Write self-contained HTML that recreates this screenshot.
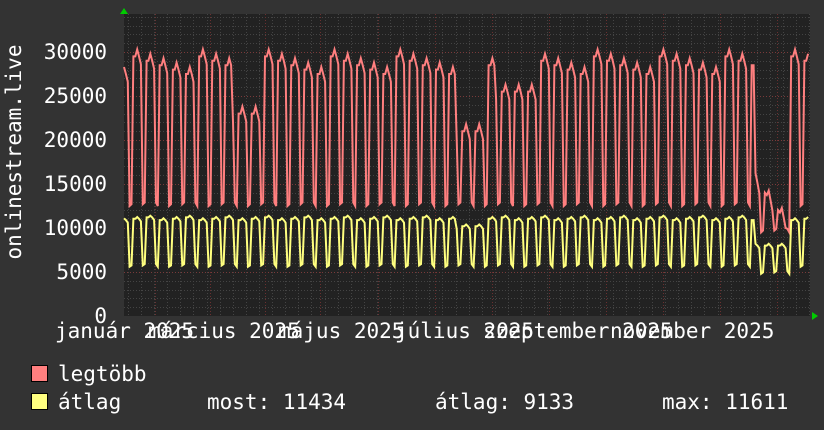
<!DOCTYPE html>
<html><head><meta charset="utf-8"><style>
html,body{margin:0;padding:0;background:#333;}
body{width:824px;height:430px;overflow:hidden;position:relative;font-family:"DejaVu Sans Mono","Liberation Mono",monospace;color:#fff;}
svg{position:absolute;left:0;top:0;}
text{font-family:"DejaVu Sans Mono","Liberation Mono",monospace;fill:#fff;font-size:21px;}
</style></head><body>
<svg id="g" width="824" height="430" xmlns="http://www.w3.org/2000/svg">
<rect x="0" y="0" width="824" height="430" fill="#333"/>
<rect x="124" y="14" width="686" height="302" fill="#222"/>
<g id="grid"></g>
<g id="lines"></g>
<polygon points="120,14 128,14 124,8" fill="#0c0"/>
<polygon points="812,312 812,320 818,316" fill="#0c0"/>
<text x="107" y="59" text-anchor="end">30000</text>
<text x="107" y="103" text-anchor="end">25000</text>
<text x="107" y="147" text-anchor="end">20000</text>
<text x="107" y="191" text-anchor="end">15000</text>
<text x="107" y="235" text-anchor="end">10000</text>
<text x="107" y="279" text-anchor="end">5000</text>
<text x="107" y="323" text-anchor="end">0</text>
<text transform="translate(21,152) rotate(-90)" text-anchor="middle">onlinestream.live</text>
<text x="55" y="338">január 2025</text>
<text x="148" y="338">március 2025</text>
<text x="278" y="338">május 2025</text>
<text x="395" y="338">július 2025</text>
<text x="483" y="338">szeptember 2025</text>
<text x="610" y="338">november 2025</text>
<rect x="31.5" y="365.5" width="16" height="16" fill="#ff7f7f" stroke="#000"/>
<rect x="31.5" y="393.5" width="16" height="16" fill="#ffff7f" stroke="#000"/>
<text x="58" y="381">legtöbb</text>
<text x="58" y="409">átlag</text>
<text x="207" y="409">most: 11434</text>
<text x="435" y="409">átlag: 9133</text>
<text x="662" y="409">max: 11611</text>
</svg>
<script>
var ns="http://www.w3.org/2000/svg";
var grid=document.getElementById("grid"),lines=document.getElementById("lines");
function ln(x1,y1,x2,y2,c,d){var l=document.createElementNS(ns,"line");l.setAttribute("x1",x1);l.setAttribute("y1",y1);l.setAttribute("x2",x2);l.setAttribute("y2",y2);l.setAttribute("stroke",c);l.setAttribute("stroke-width","1");if(d)l.setAttribute("stroke-dasharray",d);grid.appendChild(l);}
for(var v=1000;v<=34000;v+=1000){var y=Math.round(316-v*0.0088)+0.5;if(y<14)break;ln(124,y,810,y,v%5000==0?"#7a3a3a":"#444","1,2");}
for(var x=128;x<810;x+=13.1){ln(Math.round(x)+0.5,14,Math.round(x)+0.5,316,"#444","1,2");}
var months=[155,210,265,320,378,435,492,549,606,663,720,777];
months.forEach(function(m){ln(m+0.5,14,m+0.5,316,"#6a3030","1,2");});
function Y(v){return 316-v*0.0088;}
var rp=[],yp=[];var day=686/365;var n=364;
for(var i=0;i<=n;i++){
 var x=124+i*day, dow=(i+2)%7, wk=Math.floor((i+2)/7);
 var hi=27500+((wk*7919)%5)*500, lo=12500, yh=10900+((wk*31)%3)*150, yl=5600;
 if(x>232&&x<262){hi=23000;}
 if(x>455&&x<485){hi=21000;yh=10200;}
 if(x>495&&x<540){hi=25500;}
 if(x>755&&x<790){hi=15500-(x-755)*150;lo=9500;yh=8000;yl=4800;}
 var we=dow>=5;
 var r=we?lo+((i*13)%3)*200:hi+(dow==2?800:0)-(dow==4?900:0);
 var yy=we?yl+((i*7)%3)*150:yh+(dow==2?200:0)-(dow==4?300:0);
 rp.push(x.toFixed(1)+","+Y(r).toFixed(1));yp.push(x.toFixed(1)+","+Y(yy).toFixed(1));
}
function pl(p,c){var e=document.createElementNS(ns,"polyline");e.setAttribute("points",p.join(" "));e.setAttribute("fill","none");e.setAttribute("stroke",c);e.setAttribute("stroke-width","2");lines.appendChild(e);}
pl(rp,"#ff7f7f");pl(yp,"#ffff7f");
</script>
</body></html>
